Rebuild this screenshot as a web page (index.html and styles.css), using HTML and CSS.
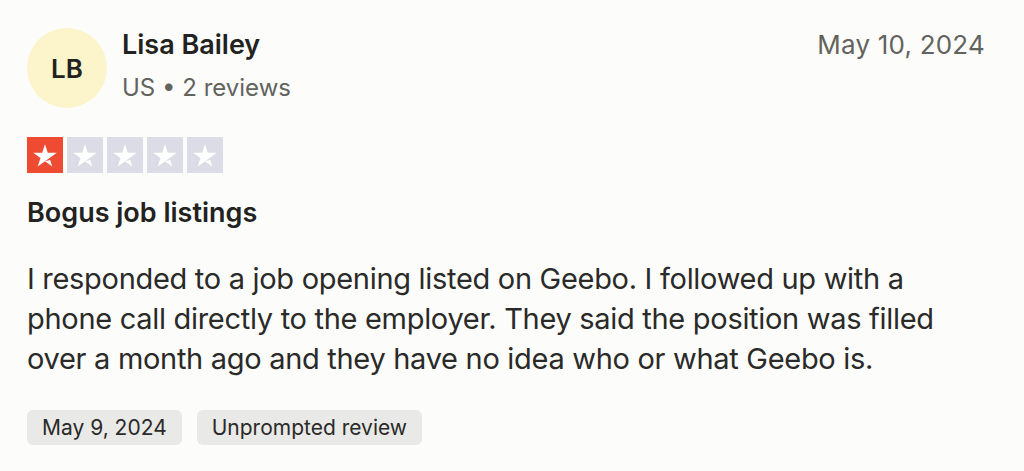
FILE: index.html
```html
<!DOCTYPE html>
<html lang="en">
<head>
<meta charset="utf-8">
<title>Review</title>
<link rel="stylesheet" href="styles.css">
</head>
<body>
<article class="review">
  <header class="head">
    <div class="avatar">LB</div>
    <div class="who">
      <div class="name">Lisa Bailey</div>
      <div class="meta">US • 2 reviews</div>
    </div>
    <time class="date">May 10, 2024</time>
  </header>
  <div class="stars">
    <span class="star on"><svg viewBox="0 0 96 96"><path d="M48 64.69L61.69 61.22L67.4 78.84L48 64.69ZM79.5 41.91H55.41L48 19.22L40.59 41.91H16.5L36 55.97L28.59 78.66L48.09 64.59L60.09 55.97L79.5 41.91Z"/></svg></span>
    <span class="star"><svg viewBox="0 0 96 96"><path d="M48 64.69L61.69 61.22L67.4 78.84L48 64.69ZM79.5 41.91H55.41L48 19.22L40.59 41.91H16.5L36 55.97L28.59 78.66L48.09 64.59L60.09 55.97L79.5 41.91Z"/></svg></span>
    <span class="star"><svg viewBox="0 0 96 96"><path d="M48 64.69L61.69 61.22L67.4 78.84L48 64.69ZM79.5 41.91H55.41L48 19.22L40.59 41.91H16.5L36 55.97L28.59 78.66L48.09 64.59L60.09 55.97L79.5 41.91Z"/></svg></span>
    <span class="star"><svg viewBox="0 0 96 96"><path d="M48 64.69L61.69 61.22L67.4 78.84L48 64.69ZM79.5 41.91H55.41L48 19.22L40.59 41.91H16.5L36 55.97L28.59 78.66L48.09 64.59L60.09 55.97L79.5 41.91Z"/></svg></span>
    <span class="star"><svg viewBox="0 0 96 96"><path d="M48 64.69L61.69 61.22L67.4 78.84L48 64.69ZM79.5 41.91H55.41L48 19.22L40.59 41.91H16.5L36 55.97L28.59 78.66L48.09 64.59L60.09 55.97L79.5 41.91Z"/></svg></span>
  </div>
  <h2 class="title">Bogus job listings</h2>
  <p class="body">I responded to a job opening listed on Geebo. I followed up with a phone call directly to the employer. They said the position was filled over a month ago and they have no idea who or what Geebo is.</p>
  <div class="chips">
    <span class="chip">May 9, 2024</span>
    <span class="chip">Unprompted review</span>
  </div>
</article>
</body>
</html>
```

FILE: styles.css
```css
* { box-sizing: border-box; }
html, body {
  margin: 0;
  background: #fcfcfb;
}
body {
  font-family: Inter, "Liberation Sans", sans-serif;
  color: #2a2a28;
}
.review {
  padding: 28px 39px 0 27px;
}
.head {
  display: flex;
  align-items: flex-start;
}
.avatar {
  width: 80px;
  height: 80px;
  border-radius: 50%;
  background: #fcf4cb;
  display: flex;
  align-items: center;
  justify-content: center;
  font-size: 26px;
  font-weight: 600;
  color: #222220;
}
.who {
  margin-left: 15px;
  flex: 1;
}
.name {
  margin-top: 2px;
  font-size: 27px;
  line-height: 30px;
  font-weight: 600;
  color: #222220;
}
.meta {
  margin-top: 13px;
  font-size: 24px;
  line-height: 30px;
  color: #63635e;
}
.date {
  margin-top: 2px;
  font-size: 26px;
  line-height: 30px;
  letter-spacing: 0.2px;
  color: #63635e;
}
.stars {
  display: flex;
  gap: 4px;
  margin-top: 29px;
}
.star {
  width: 36px;
  height: 36px;
  background: #dcdce6;
  display: flex;
}
.star.on { background: #ee4b32; }
.star svg { width: 36px; height: 36px; fill: #fff; }
.title {
  margin: 24px 0 0;
  font-size: 27px;
  line-height: 32px;
  font-weight: 600;
  color: #222220;
}
.body {
  margin: 30px 0 0;
  max-width: 945px;
  font-size: 29px;
  line-height: 40px;
  letter-spacing: -0.3px;
  font-weight: 400;
}
.chips {
  display: flex;
  gap: 15px;
  margin-top: 31px;
}
.chip {
  height: 35px;
  padding: 0 15px;
  border-radius: 6px;
  background: #e9e9e7;
  display: flex;
  align-items: center;
  font-size: 21px;
  color: #2a2a28;
}
```
